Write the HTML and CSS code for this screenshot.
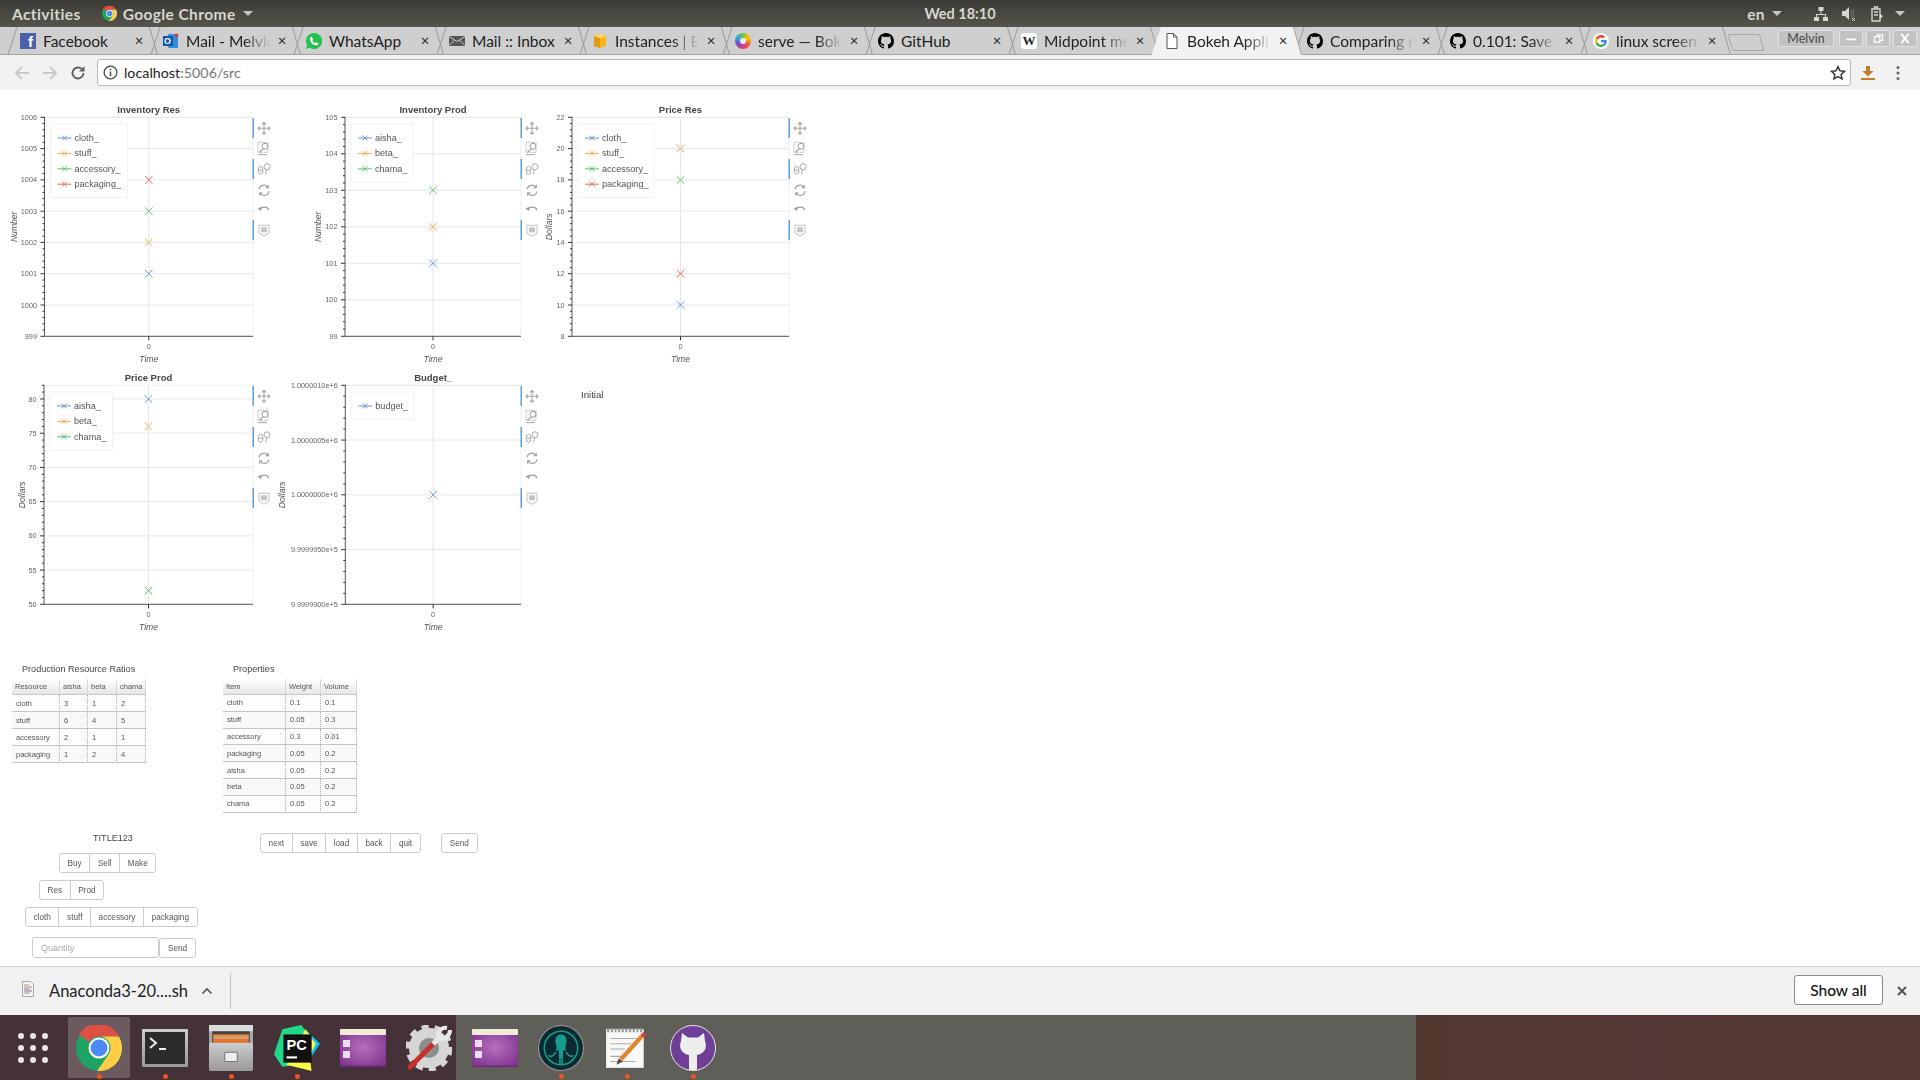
FILE: index.html
```html
<!DOCTYPE html>
<html>
<head>
  <title>Bokeh Application</title>
  <link rel="stylesheet" href="styles.css">
</head>
<body>
  <!-- shared icons -->
  <svg class="sprite" xmlns="http://www.w3.org/2000/svg">
    <defs>
      <linearGradient id="steel" x1="0" y1="0" x2="0" y2="1"><stop offset="0" stop-color="#cdcdcd"/><stop offset="1" stop-color="#989898"/></linearGradient>
      <radialGradient id="plum" cx=".5" cy=".5" r=".7"><stop offset="0" stop-color="#b56fbb"/><stop offset="1" stop-color="#7e2f8e"/></radialGradient>
    </defs>
    <symbol id="octocat" viewBox="0 0 16 16"><path d="M8 0C3.58 0 0 3.58 0 8c0 3.54 2.29 6.53 5.47 7.59.4.07.55-.17.55-.38 0-.19-.01-.82-.01-1.49-2.01.37-2.53-.49-2.69-.94-.09-.23-.48-.94-.82-1.13-.28-.15-.68-.52-.01-.53.63-.01 1.08.58 1.23.82.72 1.21 1.87.87 2.33.66.07-.52.28-.87.51-1.07-1.78-.2-3.64-.89-3.64-3.95 0-.87.31-1.59.82-2.15-.08-.2-.36-1.02.08-2.12 0 0 .67-.21 2.2.82.64-.18 1.32-.27 2-.27.68 0 1.36.09 2 .27 1.53-1.04 2.2-.82 2.2-.82.44 1.1.16 1.92.08 2.12.51.56.82 1.27.82 2.15 0 3.07-1.87 3.75-3.65 3.95.29.25.54.73.54 1.48 0 1.07-.01 1.93-.01 2.2 0 .21.15.46.55.38A8.013 8.013 0 0016 8c0-4.42-3.58-8-8-8z"/></symbol>
    <symbol id="chrome" viewBox="0 0 48 48">
      <circle cx="24" cy="24" r="24" fill="#1da462"/>
      <path fill="#dd5144" d="M3.2 9.6A24 24 0 0 1 44.8 12H24A12 12 0 0 0 13.6 18Z"/>
      <path fill="#ffcd46" d="M44.8 12A24 24 0 0 1 22 48L34.4 30A12 12 0 0 0 24 12Z"/>
      <circle cx="24" cy="24" r="11" fill="#fff"/>
      <circle cx="24" cy="24" r="8.8" fill="#4c8bf5"/>
    </symbol>
    <symbol id="purple-app" viewBox="0 0 46 38">
      <rect width="46" height="38" rx="2" fill="#6d2a7c"/>
      <rect width="46" height="36.500" rx="2" fill="url(#plum)"/>
      <rect width="46" height="6" rx="1" fill="#f0ecd6"/>
      <rect x="3" y="11" width="7" height="7" fill="#eadfec"/>
      <rect x="3" y="22" width="7" height="7" fill="#eadfec"/>
    </symbol>
    <symbol id="t-pan" viewBox="0 0 14 14"><path fill="none" stroke="#a8a8a8" stroke-width="1.1" d="M7 1v12M1 7h12M5 3l2-2 2 2M5 11l2 2 2-2M3 5L1 7l2 2M11 5l2 2-2 2"/></symbol>
    <symbol id="t-box" viewBox="0 0 14 14"><rect x="1" y="1" width="10" height="10" fill="none" stroke="#b0b0b0" stroke-dasharray="1.5 1"/><circle cx="8" cy="5" r="3" fill="none" stroke="#999"/><path stroke="#999" stroke-width="1.2" d="M6 7.5L2.5 11M1 13.5h9"/></symbol>
    <symbol id="t-wheel" viewBox="0 0 14 14"><ellipse cx="3.6" cy="8" rx="2.4" ry="4" fill="none" stroke="#a8a8a8"/><path stroke="#a8a8a8" d="M1.5 8h4"/><circle cx="10" cy="4.5" r="3" fill="none" stroke="#a8a8a8"/><path stroke="#a8a8a8" d="M9.5 7.5L8.5 12"/></symbol>
    <symbol id="t-reset" viewBox="0 0 14 14"><path fill="none" stroke="#a8a8a8" stroke-width="1.2" d="M2 6a5 5 0 0 1 9-2M12 8a5 5 0 0 1-9 2"/><path fill="#a8a8a8" d="M12 1v4H8zM2 13V9h4z"/></symbol>
    <symbol id="t-undo" viewBox="0 0 14 14"><path fill="none" stroke="#a0a0a0" stroke-width="1.2" d="M3 7a5 4.5 0 0 1 9 1"/><path fill="#a0a0a0" d="M0.5 6L5 4.5 4 9z"/></symbol>
    <symbol id="t-hover" viewBox="0 0 14 14"><path fill="none" stroke="#c0c0c0" d="M2 2h10v8l-5 3-5-3z"/><rect x="4" y="4" width="6" height="5" fill="#c4c4c4"/></symbol>
  </svg>

  <header class="topbar">
    <span class="topbar-item activities">Activities</span>
    <svg class="topbar-chrome" viewBox="0 0 48 48"><use href="#chrome"/></svg>
    <span class="topbar-item">Google Chrome</span>
    <span class="caret"></span>
    <span class="clock">Wed 18:10</span>
    <span class="topbar-item lang">en</span>
    <span class="caret"></span>
    <svg class="tray net" viewBox="0 0 16 16" fill="#d8d6d0"><rect x="5.5" y="1" width="5" height="4"/><rect x="1" y="11" width="5" height="4"/><rect x="10" y="11" width="5" height="4"/><path d="M7.5 5h1v3h4.5v3h-1V9H4v2H3V8h4.5z"/></svg>
    <svg class="tray vol" viewBox="0 0 16 16"><path fill="#d8d6d0" d="M1 5h3l4-4v13L4 10H1z"/><path fill="none" stroke="#77756f" d="M10 4c1 2 1 5 0 7M12 3c1 3 1 6 0 9"/><path stroke="#d8d6d0" d="M11 12l3 3M14 12l-3 3"/></svg>
    <svg class="tray bat" viewBox="0 0 16 16"><path fill="none" stroke="#d8d6d0" stroke-width="1.4" d="M3 3h8v12H3zM5.5 3V1h3v2M5 6h4M5 9h4"/><path fill="#d8d6d0" d="M11 8l3 2-3 3z"/></svg>
    <span class="caret last"></span>
  </header>

  <nav class="tabstrip">
    <div class="tab"><span class="fav fav-fb">f</span><span class="tab-title">Facebook</span><span class="tab-x">&#10005;</span></div>
    <div class="tab">
      <svg class="fav" viewBox="0 0 16 16"><rect x="5" y="1" width="10" height="14" rx="1" fill="#2f8fdc"/><rect y="3" width="10" height="10" fill="#1258a8"/><circle cx="13.5" cy="2.5" r="2" fill="#d8403c"/><text x="8" y="11" class="fav-letter">O</text></svg>
      <span class="tab-title fade">Mail - Melvin</span><span class="tab-x">&#10005;</span>
    </div>
    <div class="tab">
      <svg class="fav" viewBox="0 0 16 16"><path fill="#25c04e" d="M8 0a8 8 0 0 0-6.8 12.2L0 16l3.9-1.2A8 8 0 1 0 8 0z"/><path fill="#fff" d="M5.4 3.8c-.6 0-1.5.8-1.5 2.3 0 3 3.2 6.2 6.2 6.2 1.4 0 2.2-.9 2.2-1.6 0-.5-1.6-1.5-2.1-1.5-.4 0-.7.7-1.1.8-1 0-2.7-1.8-2.7-2.7 0-.4.7-.7.7-1.1 0-.5-1-2.2-1.7-2.2z"/></svg>
      <span class="tab-title">WhatsApp</span><span class="tab-x">&#10005;</span>
    </div>
    <div class="tab">
      <svg class="fav" viewBox="0 0 16 16"><rect y="3" width="16" height="10" fill="#555"/><path fill="none" stroke="#ccc" d="M0 3.5l8 5 8-5M0 12.5l5.5-5.5M16 12.5L10.5 7"/></svg>
      <span class="tab-title">Mail :: Inbox</span><span class="tab-x">&#10005;</span>
    </div>
    <div class="tab">
      <svg class="fav" viewBox="0 0 16 16"><path fill="#f7b51e" d="M8 1l6 2v10l-6 2-6-2V3z"/><path fill="#e59a12" d="M8 5v10l-6-2V3z"/><path fill="#fcd66b" d="M2 3l6-2 6 2-6 2z"/></svg>
      <span class="tab-title fade">Instances | E</span><span class="tab-x">&#10005;</span>
    </div>
    <div class="tab"><span class="fav fav-ring"></span><span class="tab-title fade">serve — Bok</span><span class="tab-x">&#10005;</span></div>
    <div class="tab"><svg class="fav" viewBox="0 0 16 16"><use href="#octocat"/></svg><span class="tab-title">GitHub</span><span class="tab-x">&#10005;</span></div>
    <div class="tab"><span class="fav fav-wiki">W</span><span class="tab-title fade">Midpoint me</span><span class="tab-x">&#10005;</span></div>
    <div class="tab active">
      <svg class="fav" viewBox="0 0 16 16"><path fill="#fff" stroke="#555" d="M3 .5h6.5L13 4v11.5H3z"/><path fill="none" stroke="#555" d="M9.5.5V4H13"/></svg>
      <span class="tab-title fade">Bokeh Appli</span><span class="tab-x">&#10005;</span>
    </div>
    <div class="tab"><svg class="fav" viewBox="0 0 16 16"><use href="#octocat"/></svg><span class="tab-title fade">Comparing r</span><span class="tab-x">&#10005;</span></div>
    <div class="tab"><svg class="fav" viewBox="0 0 16 16"><use href="#octocat"/></svg><span class="tab-title fade">0.101: Save a</span><span class="tab-x">&#10005;</span></div>
    <div class="tab">
      <svg class="fav" viewBox="0 0 48 48"><circle cx="24" cy="24" r="24" fill="#fff"/><g transform="translate(6 6) scale(.75)"><path fill="#EA4335" d="M24 9.5c3.54 0 6.71 1.22 9.21 3.6l6.85-6.85C35.9 2.38 30.47 0 24 0 14.62 0 6.51 5.38 2.56 13.22l7.98 6.19C12.43 13.72 17.74 9.5 24 9.5z"/><path fill="#4285F4" d="M46.98 24.55c0-1.57-.15-3.09-.38-4.55H24v9.02h12.94c-.58 2.96-2.26 5.48-4.78 7.18l7.73 6c4.51-4.18 7.09-10.36 7.09-17.65z"/><path fill="#FBBC05" d="M10.53 28.59c-.48-1.45-.76-2.99-.76-4.59s.27-3.14.76-4.59l-7.98-6.19C.92 16.46 0 20.12 0 24c0 3.88.92 7.54 2.56 10.78l7.97-6.19z"/><path fill="#34A853" d="M24 48c6.48 0 11.93-2.13 15.89-5.81l-7.73-6c-2.15 1.45-4.92 2.3-8.16 2.3-6.26 0-11.57-4.22-13.47-9.91l-7.98 6.19C6.51 42.62 14.62 48 24 48z"/></g></svg>
      <span class="tab-title fade">linux screen</span><span class="tab-x">&#10005;</span>
    </div>
    <div class="newtab"></div>
    <div class="window-btns">
      <span class="profile">Melvin</span>
      <span class="winbtn"><svg viewBox="0 0 24 16"><path stroke="#fff" stroke-width="2" d="M7 9h10"/></svg></span>
      <span class="winbtn"><svg viewBox="0 0 24 16"><path fill="none" stroke="#fff" stroke-width="1.3" d="M8 6h6v6H8zM11 6V4h6v6h-3"/></svg></span>
      <span class="winbtn"><svg viewBox="0 0 24 16"><path stroke="#fff" stroke-width="2" d="M8 3l8 10M16 3L8 13"/></svg></span>
    </div>
  </nav>

  <div class="toolbar">
    <svg class="tool-icon first" viewBox="0 0 16 16"><path fill="none" stroke="#c8c8c8" stroke-width="1.8" d="M15 8H2M8 2L2 8l6 6"/></svg>
    <svg class="tool-icon" viewBox="0 0 16 16"><path fill="none" stroke="#c8c8c8" stroke-width="1.8" d="M1 8h13M8 2l6 6-6 6"/></svg>
    <svg class="tool-icon" viewBox="0 0 16 16"><path fill="none" stroke="#5f6368" stroke-width="1.9" d="M13.5 8a5.5 5.5 0 1 1-1.6-3.9"/><path fill="#5f6368" d="M14.5 1v5.5H9z"/></svg>
    <div class="omnibox">
      <svg class="info" viewBox="0 0 16 16"><circle cx="8" cy="8" r="6.8" fill="none" stroke="#444" stroke-width="1.3"/><path stroke="#444" stroke-width="1.6" d="M8 7v5M8 4v1.7"/></svg>
      <span class="url-host">localhost</span><span class="url-rest">:5006/src</span>
      <svg class="star" viewBox="0 0 16 16"><path fill="none" stroke="#333" stroke-width="1.4" d="M8 1.6l1.9 4.2 4.6.5-3.4 3.1 1 4.5L8 11.6l-4.1 2.3 1-4.5L1.5 6.3l4.6-.5z"/></svg>
    </div>
    <svg class="dl-arrow" viewBox="0 0 16 16"><path fill="#c27c2c" d="M6 1h4v5h3.5L8 11.5 2.5 6H6zM1 13h14v2H1z"/></svg>
    <svg class="menu-dots" viewBox="0 0 4 16"><circle cx="2" cy="2.5" r="1.5" fill="#666"/><circle cx="2" cy="8" r="1.5" fill="#666"/><circle cx="2" cy="13.5" r="1.5" fill="#666"/></svg>
  </div>

  <main class="page">
    <div class="chart-row">
      <div class="chart" data-chart="0"></div>
      <div class="chart" data-chart="1"></div>
      <div class="chart" data-chart="2"></div>
    </div>
    <div class="chart-row">
      <div class="chart" data-chart="3"></div>
      <div class="chart" data-chart="4"></div>
      <p class="status">Initial</p>
    </div>

    <section class="tables">
      <div class="table-box ratios">
        <p class="table-title">Production Resource Ratios</p>
        <table>
          <colgroup><col class="c48"><col class="c28"><col class="c29"><col class="c29"></colgroup>
          <tr><th>Resource</th><th>aisha</th><th>beta</th><th>chama</th></tr>
          <tr><td>cloth</td><td>3</td><td>1</td><td>2</td></tr>
          <tr><td>stuff</td><td>6</td><td>4</td><td>5</td></tr>
          <tr><td>accessory</td><td>2</td><td>1</td><td>1</td></tr>
          <tr><td>packaging</td><td>1</td><td>2</td><td>4</td></tr>
        </table>
      </div>
      <div class="table-box props">
        <p class="table-title">Properties</p>
        <table>
          <colgroup><col class="c63"><col class="c35"><col class="c36"></colgroup>
          <tr><th>Item</th><th>Weight</th><th>Volume</th></tr>
          <tr><td>cloth</td><td>0.1</td><td>0.1</td></tr>
          <tr><td>stuff</td><td>0.05</td><td>0.3</td></tr>
          <tr><td>accessory</td><td>0.3</td><td>0.01</td></tr>
          <tr><td>packaging</td><td>0.05</td><td>0.2</td></tr>
          <tr><td>aisha</td><td>0.05</td><td>0.2</td></tr>
          <tr><td>beta</td><td>0.05</td><td>0.2</td></tr>
          <tr><td>chama</td><td>0.05</td><td>0.2</td></tr>
        </table>
      </div>
    </section>

    <section class="controls">
      <div class="trade-panel">
        <p class="panel-title">TITLE123</p>
        <div class="btn-group row-action"><button>Buy</button><button>Sell</button><button>Make</button></div>
        <div class="btn-group row-kind"><button>Res</button><button>Prod</button></div>
        <div class="btn-group row-item"><button>cloth</button><button>stuff</button><button>accessory</button><button>packaging</button></div>
        <div class="row-qty"><input type="text" placeholder="Quantity"><button class="btn-single">Send</button></div>
      </div>
      <div class="nav-panel">
        <div class="btn-group"><button>next</button><button>save</button><button>load</button><button>back</button><button>quit</button></div>
        <button class="btn-single nav-send">Send</button>
      </div>
    </section>
  </main>

  <div class="downloads">
    <svg class="file-icon" viewBox="0 0 12 16"><path fill="#f4f4f4" stroke="#aaa" d="M.5.5h8l3 3v12H.5z"/><path stroke="#999" d="M2 4h5M2 6h8"/><path stroke="#c66" d="M2 8h6"/><path stroke="#77a" d="M2 10h8"/><path stroke="#999" d="M2 12h6"/></svg>
    <span class="file-name">Anaconda3-20....sh</span>
    <svg class="chevron" viewBox="0 0 12 8"><path fill="none" stroke="#555" stroke-width="1.7" d="M1.5 6.5L6 2l4.5 4.5"/></svg>
    <span class="dl-sep"></span>
    <button class="show-all">Show all</button>
    <svg class="dl-close" viewBox="0 0 10 10"><path stroke="#555" stroke-width="2" d="M1 1l8 8M9 1l-8 8"/></svg>
  </div>

  <footer class="dock">
    <div class="dock-item">
      <svg class="app-grid" viewBox="0 0 30 30" fill="#e8e6e3"><circle cx="3" cy="3" r="3"/><circle cx="15" cy="3" r="3"/><circle cx="27" cy="3" r="3"/><circle cx="3" cy="15" r="3"/><circle cx="15" cy="15" r="3"/><circle cx="27" cy="15" r="3"/><circle cx="3" cy="27" r="3"/><circle cx="15" cy="27" r="3"/><circle cx="27" cy="27" r="3"/></svg>
    </div>
    <div class="dock-item running focused"><svg class="app-icon" viewBox="0 0 48 48"><use href="#chrome"/></svg></div>
    <div class="dock-item running">
      <svg class="app-icon" viewBox="0 0 46 38"><rect width="46" height="38" rx="1" fill="url(#steel)"/><rect x="3" y="3" width="40" height="32" fill="#2b2b2b"/><path fill="none" stroke="#eee" stroke-width="2" d="M8 9l6 5-6 5"/><path stroke="#eee" stroke-width="2" d="M17 20h7"/></svg>
    </div>
    <div class="dock-item running">
      <svg class="app-icon" viewBox="0 0 42 44"><rect width="42" height="44" rx="2" fill="#a9a9a9"/><rect width="42" height="6" fill="#dcdcdc"/><rect x="3" y="6" width="36" height="11" fill="#444"/><rect x="4" y="9" width="34" height="3" fill="#ec8a3a"/><rect x="4" y="12" width="34" height="1" fill="#fff"/><rect x="4" y="13" width="34" height="4" fill="#e7762c"/><rect y="17" width="42" height="27" rx="2" fill="url(#steel)"/><rect x="15" y="26" width="12" height="9" rx="1" fill="#eee" stroke="#777"/></svg>
    </div>
    <div class="dock-item running">
      <svg class="app-icon" viewBox="0 0 44 44"><path fill="#21d789" d="M8 4L26 0l6 8-8 30L8 40 0 28z"/><path fill="#07c3f2" d="M30 4l14 14-8 12z"/><path fill="#fcf84a" d="M12 38l24 6-2-14 6-12-10-14z"/><rect x="9" y="9" width="27" height="27" fill="#111"/><text x="12" y="24" class="pc-text">PC</text><rect x="12" y="30" width="10" height="2" fill="#fff"/></svg>
    </div>
    <div class="dock-item"><svg class="app-icon" viewBox="0 0 46 38"><use href="#purple-app"/></svg></div>
    <div class="dock-item">
      <svg class="app-icon" viewBox="0 0 46 46"><circle cx="23" cy="23" r="15" fill="#8d8d8d" stroke="#d6d6d6" stroke-width="10"/><circle cx="23" cy="23" r="21" fill="none" stroke="#d6d6d6" stroke-width="5" stroke-dasharray="7 6"/><path stroke="#c9302c" stroke-width="5" stroke-linecap="round" d="M4 42L28 18"/><path stroke="#e8e8e8" stroke-width="5" d="M27 19L36 10"/><path fill="none" stroke="#e8e8e8" stroke-width="4" d="M33 13c-3-5 2-11 8-10M33 13c5 3 11-2 11-8"/></svg>
    </div>
    <div class="dock-item"><svg class="app-icon" viewBox="0 0 46 38"><use href="#purple-app"/></svg></div>
    <div class="dock-item running">
      <svg class="app-icon" viewBox="0 0 44 44"><circle cx="22" cy="22" r="21.5" fill="#0b2a30" stroke="#9a9a9a"/><circle cx="22" cy="22" r="16" fill="none" stroke="#159a8e" stroke-width="1.5"/><path fill="#179c90" d="M22 9c5 0 6 5 5 9s-1 5 0 7l-3-1v8h-4v-8l-3 1c1-2 1-3 0-7s0-9 5-9z"/><path fill="none" stroke="#179c90" stroke-width="1.5" d="M17 26c-2 4-5 5-7 3M27 26c2 4 5 5 7 3M21 32v6M23 32v6"/></svg>
    </div>
    <div class="dock-item running">
      <svg class="app-icon" viewBox="0 0 44 40"><rect x="2" y="2" width="36" height="37" fill="#f8f8f6"/><path stroke="#999" stroke-dasharray="2 1.5" stroke-width="4" d="M3 3h34"/><path stroke="#aaa" d="M6 11h26M6 16h20M6 21h14M6 28h12M6 33h24"/><path stroke="#e5862a" stroke-width="4" d="M16 31L36 9"/><path fill="#444" d="M12 36l2-6 4 3z"/><path stroke="#d9453b" stroke-width="4" d="M36 9l3-3"/></svg>
    </div>
    <div class="dock-item running">
      <svg class="app-icon" viewBox="0 0 46 46"><circle cx="23" cy="23" r="22.5" fill="#6f3f97" stroke="#e8e8e8"/><path fill="#eee" d="M12 8l6 4.5h10L34 8l1 8c3 8-2 13-8 14v15h-8V30c-6-1-11-6-8-14z"/></svg>
    </div>
  </footer>

  <script src="script.js"></script>
</body>
</html>
```

FILE: styles.css
```css
* {
  box-sizing: border-box;
}

html, body {
  margin: 0;
  height: 1080px;
  overflow: hidden;
}

body {
  display: flex;
  flex-direction: column;
  font-family: "Lato", "Noto Sans", sans-serif;
  background-color: #fff;
}

.sprite {
  position: absolute;
  width: 0;
  height: 0;
}

/* ubuntu top bar */
.topbar {
  height: 27px;
  flex: none;
  display: flex;
  align-items: center;
  position: relative;
  padding-left: 12px;
  background: linear-gradient(#3b3a36, #56544c);
  color: #d8d6d0;
  font-size: 15.5px;
  font-weight: 700;
  letter-spacing: 0.4px;
}

.topbar-chrome {
  width: 15px;
  height: 15px;
  margin: 0 6px 0 21px;
}

.caret {
  width: 0;
  height: 0;
  margin-left: 7px;
  border-left: 5px solid transparent;
  border-right: 5px solid transparent;
  border-top: 5px solid #c8c6c0;
}

.clock {
  position: absolute;
  left: 0;
  right: 0;
  text-align: center;
  font-size: 14.5px;
  letter-spacing: 0;
}

.lang {
  margin-left: auto;
}

.tray {
  width: 16px;
  height: 16px;
}

.net {
  margin-left: 31px;
}

.vol {
  margin-left: 12px;
}

.bat {
  margin-left: 12px;
}

.caret.last {
  margin: 0 15px 0 10px;
}

/* tabs */
.tabstrip {
  height: 28px;
  flex: none;
  display: flex;
  position: relative;
  padding-left: 7px;
  background-color: #cfcfcf;
  border-bottom: 1px solid #a2a2a2;
}

.tab {
  width: 143px;
  height: 28px;
  flex: none;
  position: relative;
  display: flex;
  align-items: center;
  padding-left: 13px;
  color: #222;
  font-size: 15.5px;
}

.tab::before,
.tab::after {
  content: "";
  position: absolute;
  top: 0;
  width: 1px;
  height: 28px;
  background-color: #9a9a9a;
}

.tab::before {
  left: 5px;
  transform: skewX(-18deg);
}

.tab::after {
  left: 146px;
  transform: skewX(16deg);
}

.tab.active {
  z-index: 1;
}

.tab.active::before {
  left: 0;
  width: 151px;
  height: 29px;
  transform: none;
  background-color: #f2f2f2;
  clip-path: polygon(0 100%, 10px 0, 142px 0, 151px 100%);
  z-index: -1;
}

.tab.active::after {
  background-color: #a2a2a2;
}

.fav {
  width: 16px;
  height: 16px;
  flex: none;
  margin-right: 7px;
  position: relative;
}

.fav-fb {
  background-color: #4c5fa9;
  color: #fff;
  font: 700 15px/18px "Liberation Sans", sans-serif;
  text-align: right;
  padding-right: 3px;
}

.fav-letter {
  font: 700 9px "Liberation Sans", sans-serif;
  fill: #fff;
  text-anchor: end;
}

.fav-ring {
  border-radius: 50%;
  background: conic-gradient(#7ac142, #f9c712, #f0603a, #d93a8f, #7b4bc4, #2aa7df, #7ac142);
}

.fav-ring::after {
  content: "";
  position: absolute;
  inset: 5px;
  background-color: #eee;
  border-radius: 50%;
}

.fav-wiki {
  background-color: #fff;
  border-radius: 3px;
  color: #222;
  font: 700 13px/16px "Liberation Serif", serif;
  text-align: center;
}

.tab-title {
  width: 90px;
  flex: none;
  white-space: nowrap;
}

.tab-title.fade {
  -webkit-mask-image: linear-gradient(to right, #000 64%, transparent 94%);
  mask-image: linear-gradient(to right, #000 64%, transparent 94%);
}

.tab-x {
  position: absolute;
  left: 126px;
  width: 12px;
  text-align: center;
  font: 700 11.5px "DejaVu Sans", sans-serif;
  color: #333;
}

.newtab {
  width: 32px;
  height: 17px;
  margin: 7px 0 0 7px;
  background-color: #cfcfcf;
  border: 1px solid #a8a8a8;
  border-radius: 2px;
  transform: skewX(16deg);
}

.window-btns {
  margin-left: auto;
  margin-right: 3px;
  padding-top: 3px;
  display: flex;
  gap: 3px;
}

.profile {
  width: 56px;
  height: 17px;
  margin-right: 2px;
  background-color: #c2c2c2;
  border: 1px solid #e0e0e0;
  border-radius: 2px;
  color: #4a4a4a;
  font-size: 12.5px;
  line-height: 15px;
  text-align: center;
}

.winbtn {
  width: 24px;
  height: 17px;
  background-color: #c2c2c2;
  border: 1px solid #e0e0e0;
  border-radius: 2px;
  display: flex;
}

/* address bar */
.toolbar {
  height: 35px;
  flex: none;
  display: flex;
  align-items: center;
  background-color: #f2f2f2;
}

.tool-icon {
  width: 16px;
  height: 16px;
  margin-right: 12px;
}

.tool-icon.first {
  margin-left: 14px;
}

.omnibox {
  width: 1754px;
  height: 27px;
  margin-left: -1px;
  display: flex;
  align-items: center;
  padding: 0 4px 0 5px;
  background-color: #fff;
  border: 1px solid #b8b8b8;
  border-radius: 3px;
  font-size: 14.3px;
}

.info {
  width: 15px;
  height: 15px;
  margin: 0 6px 0 0;
}

.url-host {
  color: #222;
}

.url-rest {
  color: #777;
}

.star {
  width: 16px;
  height: 16px;
  margin-left: auto;
}

.dl-arrow {
  width: 16px;
  height: 16px;
  margin-left: 9px;
}

.menu-dots {
  width: 4px;
  height: 16px;
  margin-left: 20px;
}

/* bokeh page */
.page {
  flex: 1;
  min-height: 0;
  overflow: hidden;
  padding-top: 10px;
  color: #444;
  font-family: "Liberation Sans", Arial, sans-serif;
  filter: blur(0.35px);
}

.chart-row {
  height: 268px;
  display: flex;
  padding-left: 8px;
}

.chart svg {
  display: block;
  overflow: visible;
}

.chart text {
  font-family: "Liberation Sans", Arial, sans-serif;
}

.chart .c-title {
  font-size: 9.5px;
  font-weight: 700;
  fill: #444;
  text-anchor: middle;
}

.chart .c-tick {
  font-size: 7.3px;
  fill: #666;
}

.chart .c-axis {
  font-size: 8.6px;
  font-style: italic;
  fill: #555;
  text-anchor: middle;
}

.chart .c-legend {
  font-size: 9.1px;
  fill: #555;
}

.status {
  margin: 21px 0 0 40px;
  font-size: 9.6px;
  line-height: 12px;
}

.tables {
  height: 151px;
  margin-top: 27px;
  display: flex;
  align-items: flex-start;
}

.ratios {
  margin-left: 12px;
}

.props {
  margin-left: 77px;
}

.table-title {
  margin: 0 0 4px 10px;
  font-size: 9.1px;
  line-height: 12px;
}

table {
  width: 134px;
  border-collapse: separate;
  border-spacing: 0;
  table-layout: fixed;
  font-size: 7.5px;
}

.c48 { width: 48px; }
.c28 { width: 28px; }
.c29 { width: 29px; }
.c63 { width: 63px; }
.c35 { width: 35px; }
.c36 { width: 36px; }

th {
  height: 16px;
  padding: 0 2px 0 3px;
  font-weight: 400;
  text-align: left;
  color: #555;
  background: linear-gradient(#fff, #e6e6e6);
  border-bottom: 1px solid #c8c8c8;
  border-right: 1px solid #d8d8d8;
}

td {
  height: 17px;
  padding: 0 2px 0 4px;
  color: #555;
  background-color: #fdfdfd;
  border-bottom: 1px solid #c4c4c4;
  border-right: 1px dotted #b0b0b0;
}

.props td {
  height: 16.8px;
}

tr:nth-child(odd) td {
  background-color: #f9f9f9;
}

/* widgets */
.controls {
  margin-top: 18px;
  display: flex;
  align-items: flex-start;
}

.trade-panel {
  width: 240px;
  flex: none;
  display: flex;
  flex-direction: column;
  align-items: flex-start;
}

.panel-title {
  margin: 0 0 9px 93px;
  font-size: 9.1px;
  line-height: 12px;
}

button {
  height: 20px;
  padding: 0 8px;
  font-family: "Liberation Sans", Arial, sans-serif;
  font-size: 8.2px;
  color: #555;
  background-color: #fff;
  cursor: pointer;
}

.btn-group {
  display: flex;
  border: 1px solid #ccc;
  border-radius: 3px;
  height: 20px;
}

.btn-group button {
  height: 18px;
  padding: 0 7.6px;
  border: none;
  border-left: 1px solid #ccc;
  background: transparent;
}

.btn-group button:first-child {
  border-left: none;
}

.btn-single {
  border: 1px solid #ccc;
  border-radius: 3px;
}

.row-action {
  margin: 0 0 7px 59px;
}

.row-kind {
  margin: 0 0 7px 39px;
}

.row-item {
  margin: 0 0 10px 25px;
}

.row-qty {
  margin-left: 32px;
  display: flex;
  align-items: flex-end;
}

.row-qty input {
  width: 127px;
  height: 21px;
  padding: 0 8px;
  border: 1px solid #ccc;
  border-radius: 3px;
  outline: none;
  font-family: "Liberation Sans", Arial, sans-serif;
  font-size: 9px;
}

.row-qty input::placeholder {
  color: #aaa;
}

.nav-panel {
  margin: 1px 0 0 20px;
  display: flex;
  gap: 20px;
}

/* download shelf */
.downloads {
  height: 49px;
  flex: none;
  display: flex;
  align-items: center;
  padding-left: 22px;
  background-color: #f1f1f1;
  border-top: 1px solid #d2d2d2;
}

.file-icon {
  width: 12px;
  height: 16px;
  margin-right: 15px;
  margin-top: -4px;
}

.file-name {
  width: 152px;
  font-size: 16.5px;
  color: #222;
}

.chevron {
  width: 12px;
  height: 8px;
}

.dl-sep {
  width: 1px;
  height: 36px;
  margin-left: 17px;
  background-color: #c4c4c4;
}

.show-all {
  width: 89px;
  height: 30px;
  margin: -2px 0 0 auto;
  padding: 0;
  border: 1px solid #8a8a8a;
  border-radius: 3px;
  background-color: #fff;
  color: #111;
  font-family: "Lato", "Noto Sans", sans-serif;
  font-size: 15.5px;
  font-weight: 500;
}

.dl-close {
  width: 10px;
  height: 10px;
  margin: 0 13px 0 14px;
}

/* ubuntu dock */
.dock {
  height: 65px;
  flex: none;
  display: flex;
  background: linear-gradient(to right, #453238 0, #453238 456px, #5f5e58 456px, #5f5e58 1416px, #50382f 1416px, #543835 1640px, #523a33 100%);
}

.dock-item {
  width: 66px;
  height: 65px;
  flex: none;
  position: relative;
  display: flex;
  align-items: center;
  justify-content: center;
}

.dock-item.focused {
  background-color: #6b5b5e;
  border-radius: 4px;
  background-clip: content-box;
  padding: 2px;
}

.dock-item.running::after {
  content: "";
  position: absolute;
  left: 31px;
  bottom: 1px;
  width: 5px;
  height: 5px;
  background-color: #e95420;
  border-radius: 50%;
}

.app-grid {
  width: 30px;
  height: 30px;
}

.app-icon {
  width: 46px;
  height: 46px;
}

.pc-text {
  font: 700 14px "Liberation Sans", sans-serif;
  fill: #fff;
}
```

FILE: script.js
```js
// bokeh style plots, drawn from the data below
const COLORS = { blue: "#6b98da", orange: "#f6ad58", green: "#5cc666", red: "#e4666a" };
const PLOT_TOP = 17.3;
const PLOT_BOTTOM = 236.3;
const BARS = [[0.7, 20], [41.7, 20], [102.7, 20]];
const TOOLS = [["t-pan", 11], ["t-box", 31], ["t-wheel", 52], ["t-reset", 73], ["t-undo", 92], ["t-hover", 113]];

const charts = [
  { title: "Inventory Res", w: 287, left: 36.5, right: 245, yLabel: "Number", yLabelX: 5.5, min: 999, max: 1006, step: 1, legendW: 77,
    series: [["cloth_", "blue", 1001], ["stuff_", "orange", 1002], ["accessory_", "green", 1003], ["packaging_", "red", 1004]] },
  { title: "Inventory Prod", w: 245, left: 50, right: 226, yLabel: "Number", yLabelX: 23, min: 99, max: 105, step: 1, legendW: 62,
    series: [["aisha_", "blue", 101], ["beta_", "orange", 102], ["chama_", "green", 103]] },
  { title: "Price Res", w: 275, left: 32, right: 249, yLabel: "Dollars", yLabelX: 9, min: 8, max: 22, step: 2, legendW: 76,
    series: [["cloth_", "blue", 10], ["stuff_", "orange", 20], ["accessory_", "green", 18], ["packaging_", "red", 12]] },
  { title: "Price Prod", w: 268, left: 36, right: 245, yLabel: "Dollars", yLabelX: 13.6, min: 50, max: 82, step: 5, legendW: 62.6,
    series: [["aisha_", "blue", 80], ["beta_", "orange", 76], ["chama_", "green", 52]] },
  { title: "Budget_", w: 265, left: 69.3, right: 245, yLabel: "Dollars", yLabelX: 5.6, min: -2, max: 2, step: 1, legendW: 62.6,
    labels: { "2": "1.0000010e+6", "1": "1.0000005e+6", "0": "1.0000000e+6", "-1": "9.9999950e+5", "-2": "9.9999900e+5" },
    series: [["budget_", "blue", 0]] }
];

function cross(x, y, r, color, width) {
  return `<path d="M${x - r} ${y - r}L${x + r} ${y + r}M${x + r} ${y - r}L${x - r} ${y + r}" stroke="${color}" stroke-width="${width}"/>`;
}

function drawChart(c) {
  const y = v => PLOT_BOTTOM - (v - c.min) / (c.max - c.min) * (PLOT_BOTTOM - PLOT_TOP);
  const mid = (c.left + c.right) / 2;
  let grid = "", ticks = "", labels = "";

  // ticks go five to a major step
  for (let i = 0; c.min + i * c.step / 5 <= c.max + 1e-9; i++) {
    const v = c.min + i * c.step / 5;
    const py = y(v);
    const isMajor = Math.abs(v / c.step - Math.round(v / c.step)) < 1e-6;
    ticks += `<path d="M${c.left - (isMajor ? 4 : 2)} ${py}H${c.left}" stroke="#333" stroke-width="1"/>`;
    if (isMajor) {
      grid += `<path d="M${c.left} ${py}H${c.right}" stroke="#e8e8e8"/>`;
      const text = c.labels ? c.labels[String(Math.round(v))] : String(Math.round(v));
      labels += `<text class="c-tick" x="${c.left - 7.5}" y="${py + 2.6}" text-anchor="end">${text}</text>`;
    }
  }

  const top = PLOT_TOP + 6.7;
  const legendH = 12 + c.series.length * 15.4;
  let legend = `<rect x="${c.left + 6}" y="${top}" width="${c.legendW}" height="${legendH}" fill="#fff" stroke="#f1f1f1"/>`;
  let points = "";
  c.series.forEach((s, i) => {
    const ly = top + 14 + i * 15.4;
    const lx = c.left + 13;
    legend += `<path d="M${lx} ${ly}H${lx + 14}" stroke="${COLORS[s[1]]}"/>` + cross(lx + 7, ly, 2.4, COLORS[s[1]], 1);
    legend += `<text class="c-legend" x="${lx + 17}" y="${ly + 3}">${s[0]}</text>`;
    points += cross(mid, y(s[2]), 3.8, COLORS[s[1]], 1);
  });

  let tools = "";
  BARS.forEach(b => {
    tools += `<rect x="${c.right - 0.5}" y="${PLOT_TOP + b[0]}" width="1.5" height="${b[1]}" fill="#5c9fdc"/>`;
  });
  TOOLS.forEach(t => {
    tools += `<use href="#${t[0]}" x="${c.right + 4}" y="${PLOT_TOP + t[1] - 7}" width="14" height="14"/>`;
  });

  const ly = (PLOT_TOP + PLOT_BOTTOM) / 2;
  return `<svg xmlns="http://www.w3.org/2000/svg" width="${c.w}" height="268" viewBox="0 0 ${c.w} 268">
    <text class="c-title" x="${mid}" y="13">${c.title}</text>
    <path d="M${c.left} ${PLOT_TOP}H${c.right}V${PLOT_BOTTOM}" fill="none" stroke="#efefef"/>
    ${grid}
    <path d="M${mid} ${PLOT_TOP}V${PLOT_BOTTOM}" stroke="#e6e6e6"/>
    ${legend}
    ${points}
    <path d="M${c.left} ${PLOT_TOP - 0.5}V${PLOT_BOTTOM}H${c.right}" fill="none" stroke="#555" stroke-width="1"/>
    ${ticks}
    <path d="M${mid} ${PLOT_BOTTOM}v4" stroke="#333"/>
    ${labels}
    <text class="c-tick" x="${mid}" y="${PLOT_BOTTOM + 13}" text-anchor="middle">0</text>
    <text class="c-axis" x="${mid}" y="${PLOT_BOTTOM + 26}">Time</text>
    <text class="c-axis" transform="translate(${c.yLabelX} ${ly}) rotate(-90)" dy="3">${c.yLabel}</text>
    ${tools}
  </svg>`;
}

document.querySelectorAll(".chart").forEach(el => {
  const c = charts[Number(el.dataset.chart)];
  el.innerHTML = drawChart(c);
});
```
